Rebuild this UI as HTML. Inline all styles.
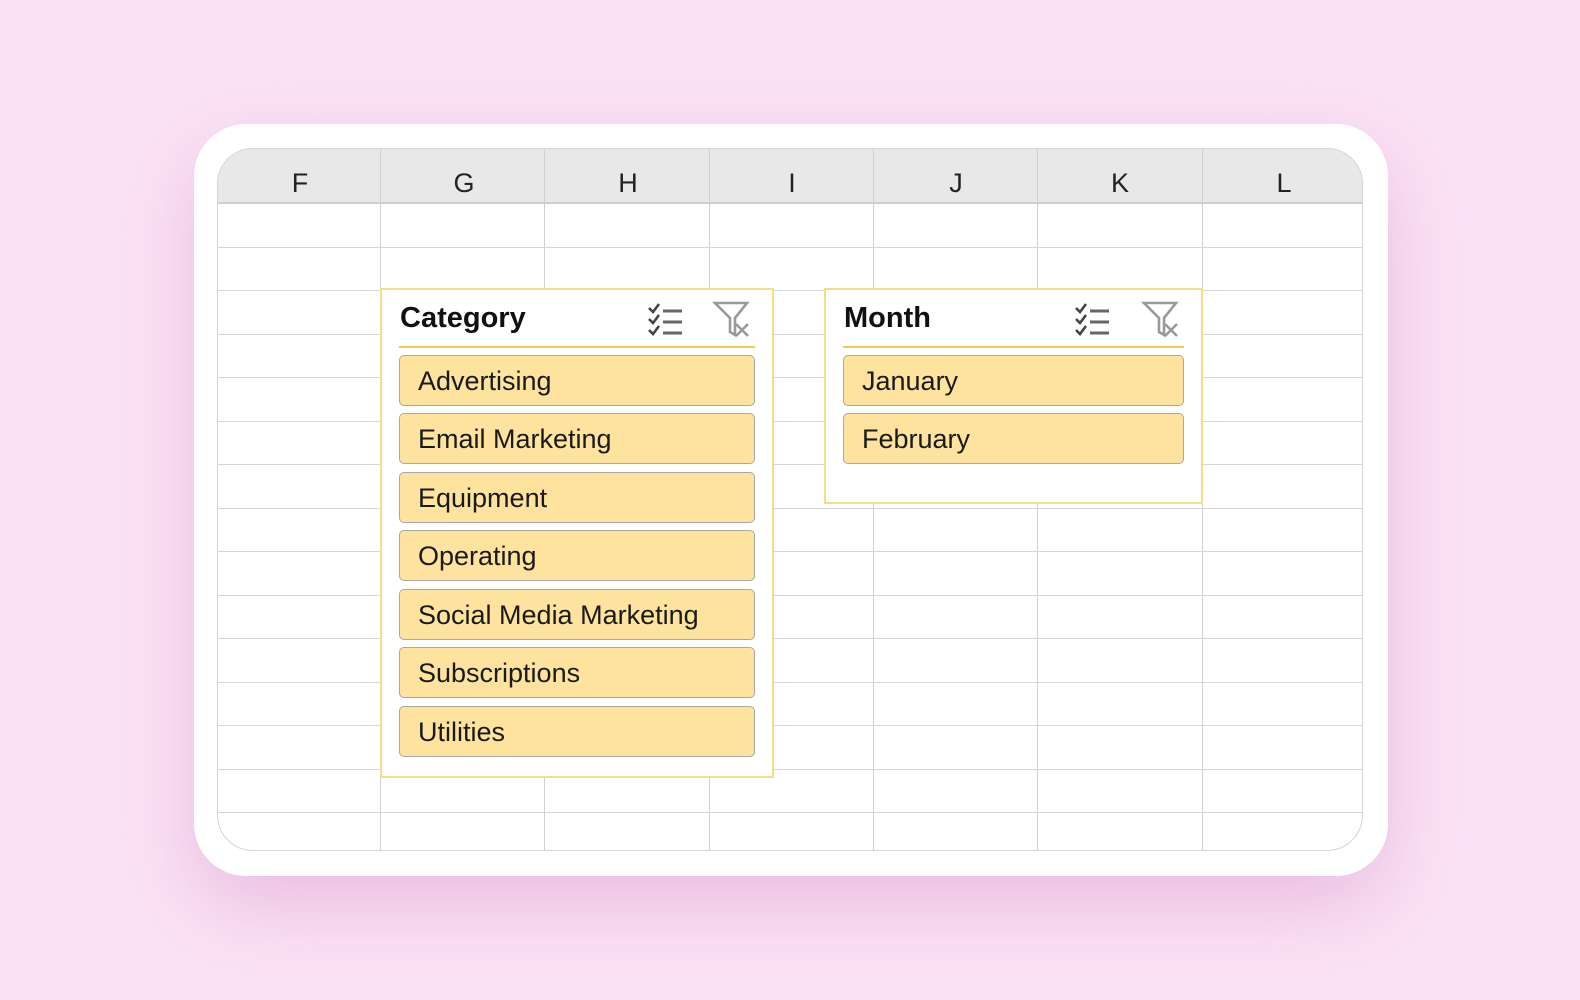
<!DOCTYPE html>
<html><head><style>
*{margin:0;padding:0;box-sizing:border-box}
body{width:1580px;height:1000px;background:#fbe2f6;position:relative;overflow:hidden;font-family:"Liberation Sans",sans-serif}
.card{position:absolute;left:194px;top:124px;width:1194px;height:752px;background:#fff;border-radius:52px;box-shadow:0 30px 80px rgba(200,120,180,.35)}
.tbl{position:absolute;left:217px;top:148px;width:1146px;height:703px;border:1.5px solid #d4d4d4;border-radius:36px;overflow:hidden;background:#fff}
.hdr{position:absolute;left:0;top:0;width:100%;height:55px;background:#e8e8e8;border-bottom:2px solid #cfcfcf}
.col{position:absolute;top:0;height:100%;border-left:1px solid #d0d0d0}
.hl{position:absolute;top:19px;font-size:27px;color:#222;text-align:center;width:164px}
.row{position:absolute;left:0;width:100%;border-top:1px solid #d6d6d6}
.sl{position:absolute;background:#fff;border:2px solid #f7dc8a}
.title{position:absolute;left:18px;top:12px;font-size:29px;font-weight:bold;color:#111}
.sep{position:absolute;left:17px;right:17px;top:56px;border-top:2px solid #f2c84f}
.it{position:absolute;left:17px;right:17px;height:51px;background:#fde39d;border:1.5px solid #a8a8a8;border-radius:5px;font-size:27px;color:#1a1a1a;padding-left:18px;line-height:51px}
.ic{position:absolute;top:10px}
</style></head><body>
<div class="card"></div>
<div class="tbl">
<div class="hdr"></div>
<div class="hl" style="left:0">F</div><div class="hl" style="left:164px">G</div><div class="hl" style="left:328px">H</div><div class="hl" style="left:492px">I</div><div class="hl" style="left:656px">J</div><div class="hl" style="left:820px">K</div><div class="hl" style="left:984px">L</div>
<div class="col" style="left:162px"></div><div class="col" style="left:326px"></div><div class="col" style="left:491px"></div><div class="col" style="left:655px"></div><div class="col" style="left:819px"></div><div class="col" style="left:984px"></div>
<div class="row" style="top:98px"></div><div class="row" style="top:141px"></div><div class="row" style="top:185px"></div><div class="row" style="top:228px"></div><div class="row" style="top:272px"></div><div class="row" style="top:315px"></div><div class="row" style="top:359px"></div><div class="row" style="top:402px"></div><div class="row" style="top:446px"></div><div class="row" style="top:489px"></div><div class="row" style="top:533px"></div><div class="row" style="top:576px"></div><div class="row" style="top:620px"></div><div class="row" style="top:663px"></div>
</div>

<div class="sl" style="left:380px;top:288px;width:394px;height:490px">
<div class="title">Category</div>
<svg class="ic" style="left:265px" width="40" height="40" viewBox="0 0 40 40" fill="none" stroke="#444" stroke-width="2.6"><path d="M2 8l4 4 6-8M2 19l4 4 6-8M2 30l4 4 6-8"/><path d="M16 11h19M16 22h19M16 33h19" stroke="#666" stroke-width="3"/></svg>
<svg class="ic" style="left:330px" width="40" height="40" viewBox="0 0 40 40" fill="none" stroke="#999" stroke-width="2.6"><path d="M3 3h32l-12 15v17l-5-3V18z"/><path d="M24 24l12 12M36 24L24 36"/></svg>
<div class="sep"></div>
<div class="it" style="top:65px">Advertising</div>
<div class="it" style="top:123px">Email Marketing</div>
<div class="it" style="top:182px">Equipment</div>
<div class="it" style="top:240px">Operating</div>
<div class="it" style="top:299px">Social Media Marketing</div>
<div class="it" style="top:357px">Subscriptions</div>
<div class="it" style="top:416px">Utilities</div>
</div>

<div class="sl" style="left:824px;top:288px;width:379px;height:216px">
<div class="title">Month</div>
<svg class="ic" style="left:248px" width="40" height="40" viewBox="0 0 40 40" fill="none" stroke="#444" stroke-width="2.6"><path d="M2 8l4 4 6-8M2 19l4 4 6-8M2 30l4 4 6-8"/><path d="M16 11h19M16 22h19M16 33h19" stroke="#666" stroke-width="3"/></svg>
<svg class="ic" style="left:315px" width="40" height="40" viewBox="0 0 40 40" fill="none" stroke="#999" stroke-width="2.6"><path d="M3 3h32l-12 15v17l-5-3V18z"/><path d="M24 24l12 12M36 24L24 36"/></svg>
<div class="sep"></div>
<div class="it" style="top:65px">January</div>
<div class="it" style="top:123px">February</div>
</div>
</body></html>
